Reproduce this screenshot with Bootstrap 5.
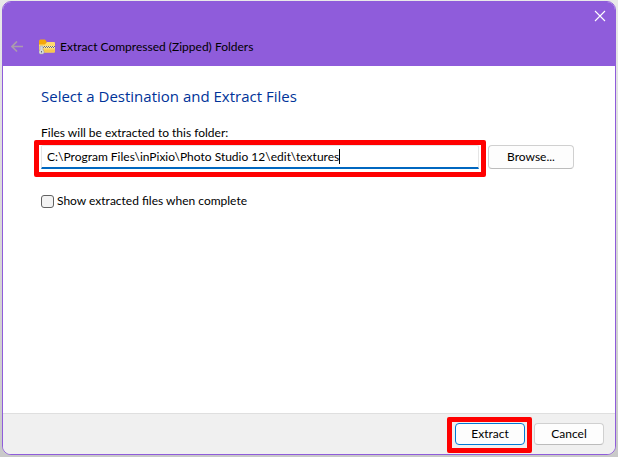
<!DOCTYPE html>
<html lang="en">
<head>
<meta charset="utf-8">
<meta name="viewport" content="width=device-width, initial-scale=1">
<title>Extract Compressed (Zipped) Folders</title>
<link href="https://cdn.jsdelivr.net/npm/bootstrap@5.3.0/dist/css/bootstrap.min.css" rel="stylesheet">
<style>
body { font: 12px/16px Lato, "Open Sans", sans-serif; color: #000; background: linear-gradient(#e9e9e9, #c9c9c9); padding: 1px 2px 2px; }
.dialog { border: 1px solid #8f5cdb; border-radius: 9px; background: #fff; overflow: hidden; }
.title-bar { background: #8f5cdb; height: 64px; padding: 8px 9px 11px 8px; }
.icon-btn { border: 0; padding: 0; background: none; line-height: 0; }
.title-row { gap: 16px; }
.content-area { padding: 19px 41px 0 38px; }
h1 { font: 400 15px/22px "Open Sans", "Noto Sans", sans-serif; color: #003399; margin: 0 0 18px; }
.field-row { gap: 9px; margin: 4px 0 24px; }
.path-input { height: 24px; border: 1px solid #e5e5e5; border-bottom: 2px solid #0067c0; border-radius: 2px 2px 0 0; padding: 0 5px; font-size: 12px; color: #000; background: #fff linear-gradient(#000, #000) 297px 3px / 1px 15px no-repeat; }
.path-input:focus { color: #000; box-shadow: none; background-color: #fff; border-color: #e5e5e5 #e5e5e5 #0067c0; }
.dlg-btn { font-size: 12px; line-height: 16px; padding: 0; color: #000; background: #fdfdfd; border: 1px solid #d0d0d0; border-bottom-color: #bcbcbc; border-radius: 4px; width: 70px; height: 22px; }
.dlg-btn.browse { width: 86px; height: 24px; }
.dlg-btn.default { border-color: #0078d4; }
.highlight { position: absolute; border: 5px solid #f00; border-radius: 2px; pointer-events: none; }
.around-path { inset: -5px -7px -8px; }
.around-extract { inset: -6px -7px -8px -8px; }
.tick-row { gap: 3px; }
.tick { width: 13px; height: 13px; margin: 0; border: 1px solid #626262; background-color: #f3f3f3; }
.actions { background: #f0f0f0; border-top: 1px solid #dfdfdf; padding: 9px 11px; gap: 9px; }
</style>
<script src="https://cdn.jsdelivr.net/npm/bootstrap@5.3.0/dist/js/bootstrap.bundle.min.js"></script>
</head>
<body class="d-flex flex-column min-vh-100">
<main class="dialog d-flex flex-column flex-grow-1">
  <header class="title-bar d-flex flex-column justify-content-between">
    <button type="button" class="icon-btn align-self-end" aria-label="Close">
      <svg width="12" height="12" viewBox="0 0 12 12" fill="none" stroke="#fff" stroke-width="1.1"><path d="M1 1l10 10M11 1L1 11"/></svg>
    </button>
    <div class="title-row d-flex align-items-center">
      <button type="button" class="icon-btn" aria-label="Back">
        <svg width="12" height="12" viewBox="0 0 12 12" fill="none" stroke="#aa9aae" stroke-width="1.700"><path d="M12 5.500H1M6 .5l-5 5 5 5"/></svg>
      </button>
      <div class="d-flex align-items-center gap-1">
        <svg width="17" height="16" viewBox="0 0 17 16">
          <path d="M0 2Q0 .5 1.500 .5H6l1.500 2V7H0z" fill="#f5a70a"/>
          <path d="M0 5.500h6l2-2.500h7q1 0 1 1v8.500q0 1-1 1H1q-1 0-1-1z" fill="#ffdc70"/>
          <path d="M0 10.500h16v2q0 1-1 1H1q-1 0-1-1z" fill="#f7c64e"/>
          <path d="M3 8h13" stroke="#eee6cc" stroke-width="2"/>
          <path d="M3 7.500h13" stroke="#77716a" stroke-width="1" stroke-dasharray="1 1"/>
          <path d="M4 8.500h12" stroke="#77716a" stroke-width="1" stroke-dasharray="1 1"/>
          <path d="M1 7h3v4l1 1v2l-1 1H1l-1-1v-2l1-1z" fill="#d7d9dc" stroke="#999ca4" stroke-width=".5"/>
          <path d="M2 12h1v1.500H2z" fill="#696d75"/>
        </svg>
        <span>Extract Compressed (Zipped) Folders</span>
      </div>
    </div>
  </header>
  <form class="content-area flex-grow-1">
    <h1>Select a Destination and Extract Files</h1>
    <label for="path" class="d-block">Files will be extracted to this folder:</label>
    <div class="field-row d-flex">
      <div class="position-relative flex-grow-1">
        <input id="path" type="text" class="form-control path-input" value="C:\Program Files\inPixio\Photo Studio 12\edit\textures" spellcheck="false">
        <span class="highlight around-path"></span>
      </div>
      <button type="button" class="btn dlg-btn browse">Browse...</button>
    </div>
    <div class="tick-row d-flex align-items-center">
      <input id="show" type="checkbox" class="form-check-input tick">
      <label for="show">Show extracted files when complete</label>
    </div>
  </form>
  <footer class="actions d-flex justify-content-end">
    <div class="position-relative">
      <button type="button" class="btn dlg-btn default d-block">Extract</button>
      <span class="highlight around-extract"></span>
    </div>
    <button type="button" class="btn dlg-btn">Cancel</button>
  </footer>
</main>
</body>
</html>
